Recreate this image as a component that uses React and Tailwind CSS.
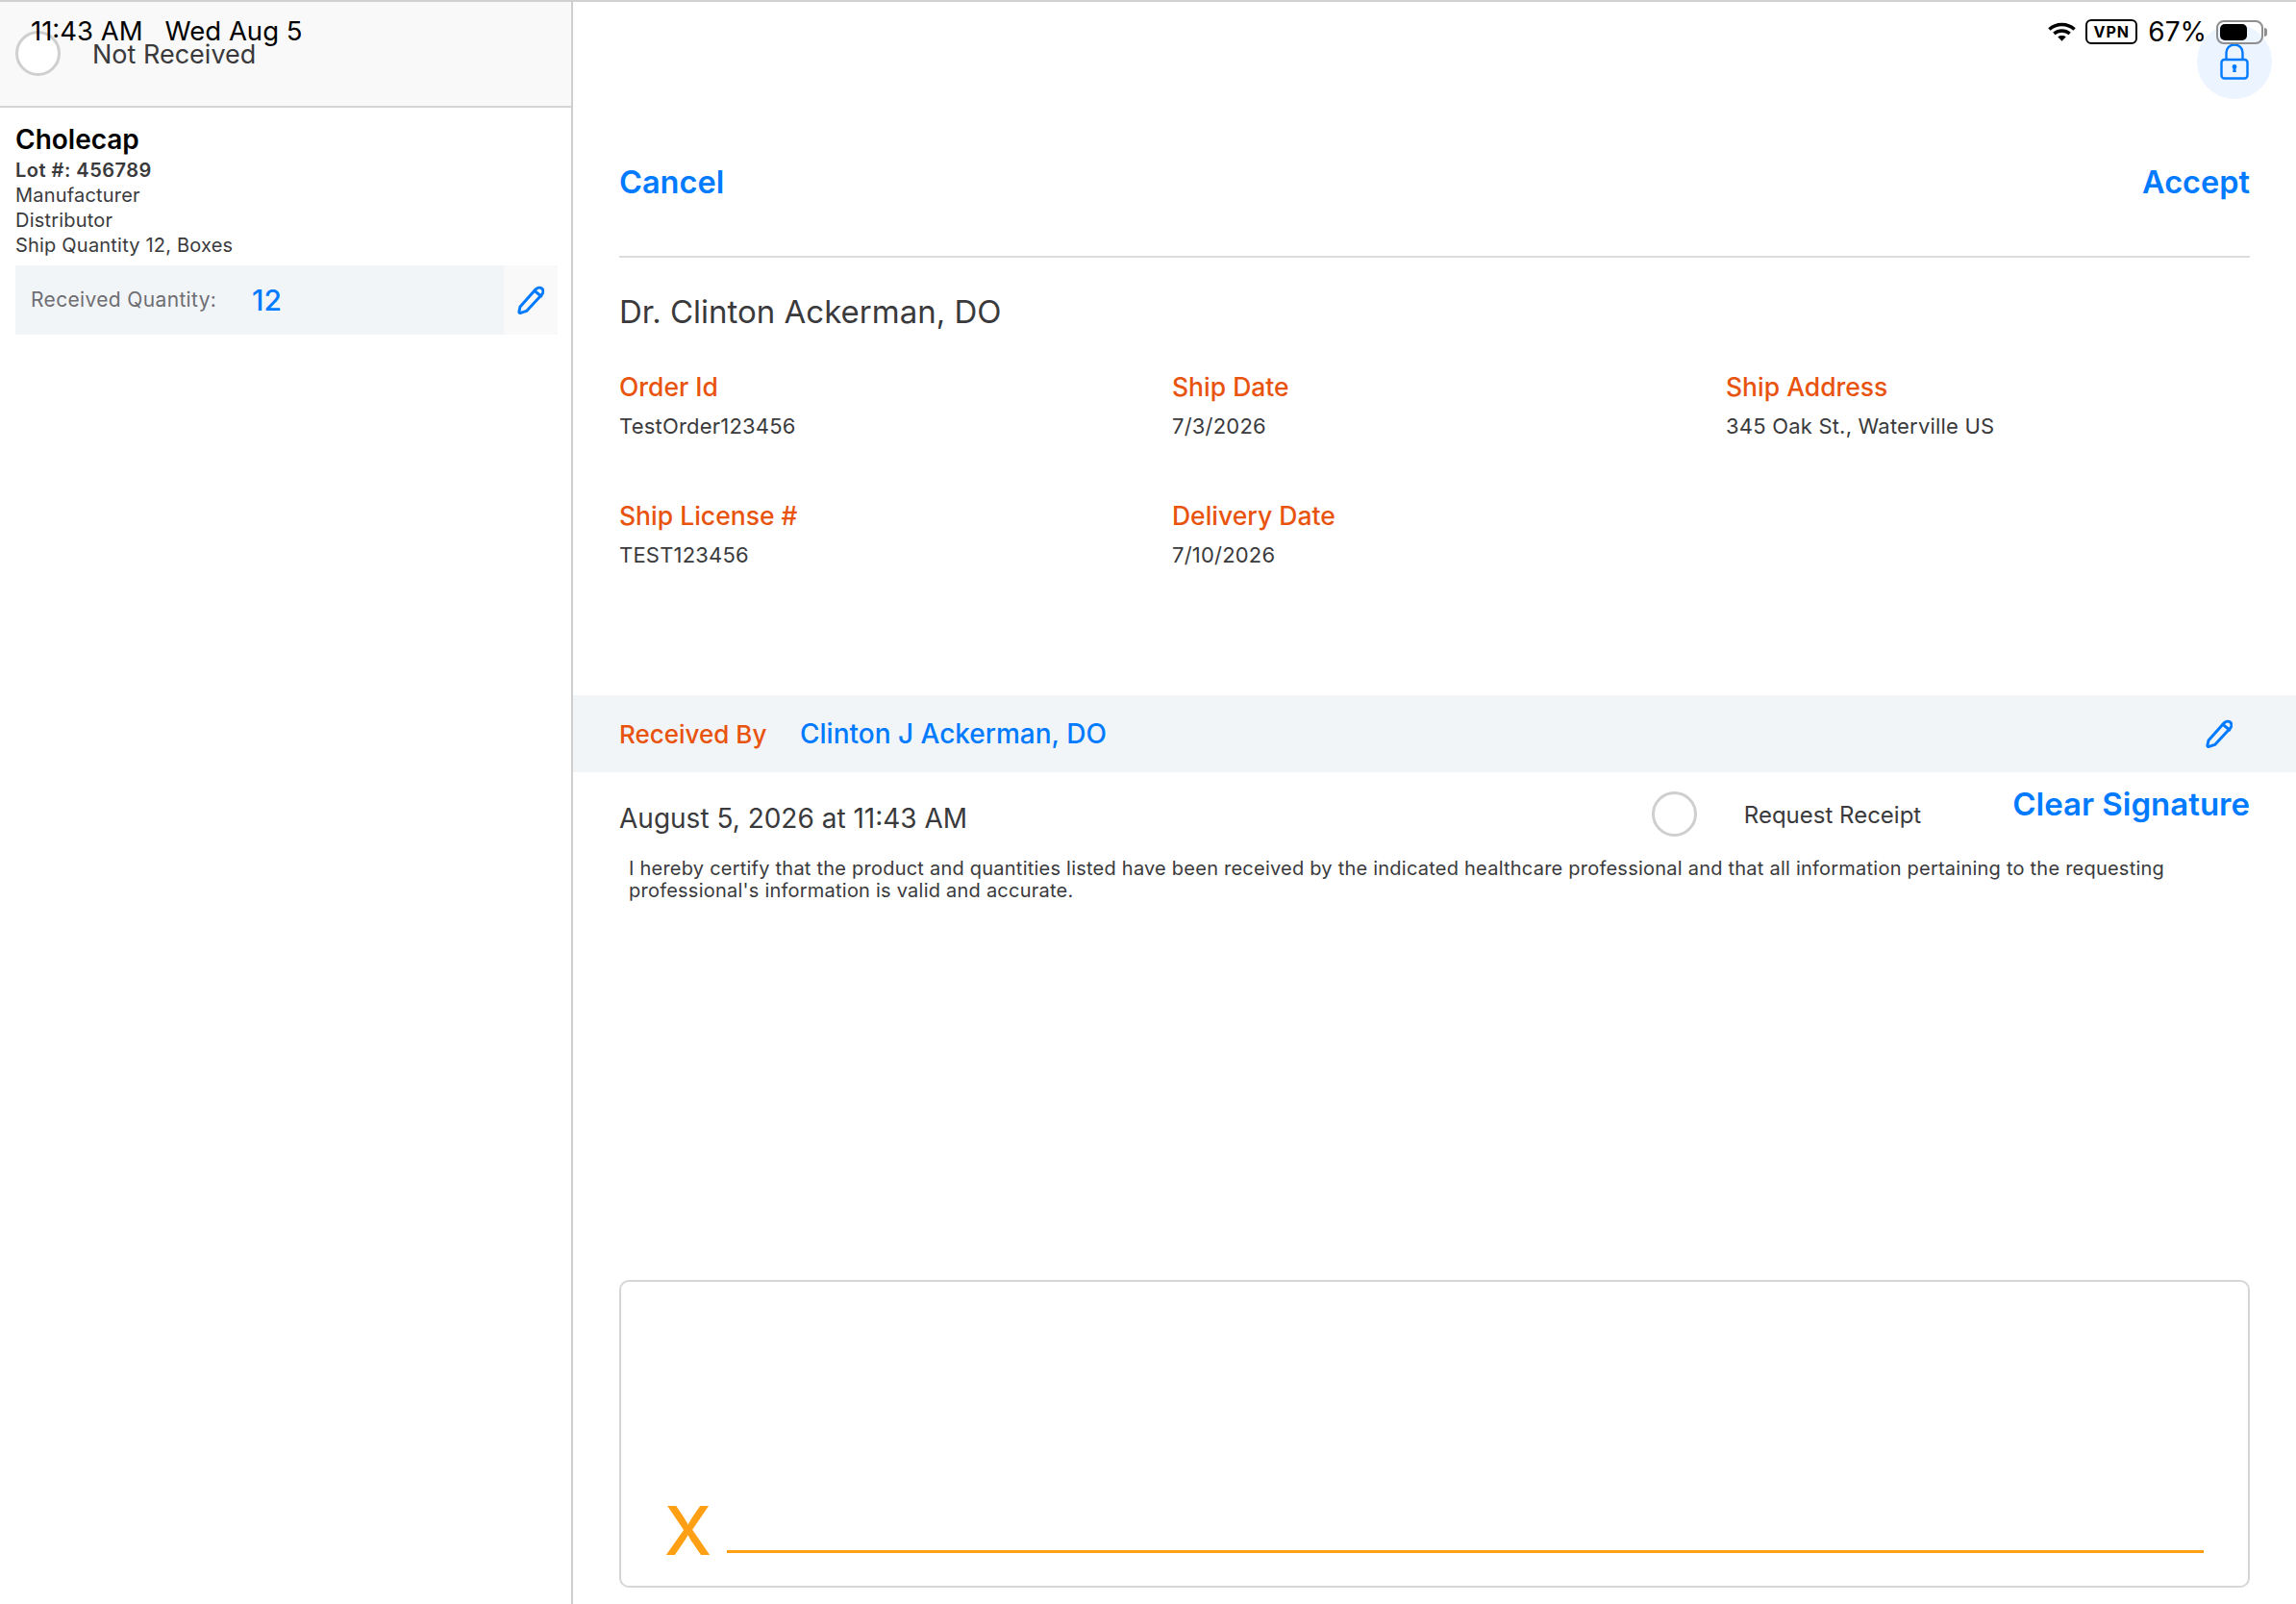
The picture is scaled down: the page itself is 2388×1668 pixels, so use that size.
import React from "react";

const Pencil = ({ className }) => (
    <svg viewBox="0 0 28 30" fill="none" stroke="#007aff" strokeWidth="3" strokeLinejoin="round" strokeLinecap="round" className={className}>
        <path d="M3 22 L19 4 C21 1.8 24 1.6 25.8 3.2 C27.4 4.8 27.2 7.4 25.4 9.4 L9.6 26.4 L3.6 28.4 C2.4 28.8 1.6 28 1.9 26.8 Z" />
        <path d="M18 5.4 L24.8 11" />
    </svg>
);

const Radio = () => <div className="w-[47px] h-[47px] rounded-full border-[3px] border-[#cfcfcf] bg-white shrink-0" />;

const InfoField = ({ label, value, className }) => (
    <div className={className}>
        <div className="text-[26.5px] leading-[32px] font-medium text-[#e8530e]">{label}</div>
        <div className="text-[22px] leading-[28px] tracking-[0.2px] mt-[11px] text-[#3a3a3c]">{value}</div>
    </div>
);

const StatusBar = () => (
    <>
        <div className="absolute top-[12px] left-[32px] flex text-[27.5px] leading-[36px] text-black z-10">
            <span>11:43 AM</span>
            <span className="ml-[23px]">Wed Aug 5</span>
        </div>
        <div className="absolute top-[13px] right-[30px] flex items-center h-[36px] z-10">
            <svg viewBox="0 0 30 20" className="w-[29px] h-[20px]" fill="none" stroke="#000" strokeWidth="3.6">
                <path d="M1.5 7.5 C9 0.5 21 0.5 28.5 7.5" />
                <path d="M6.5 12 C11.5 7.8 18.5 7.8 23.5 12" />
                <path d="M15 20 L10.6 15.4 C13 13.6 17 13.6 19.4 15.4 Z" fill="#000" stroke="none" />
            </svg>
            <div className="ml-[10px] w-[54px] h-[26px] rounded-[6px] border-2 border-black flex items-center justify-center text-[16px] font-bold tracking-[1px] text-black">VPN</div>
            <span className="ml-[11px] text-[28px] text-black">67%</span>
            <div className="ml-[10px] w-[49px] h-[25px] rounded-[8px] border-2 border-[#8e8e8e] p-[2px]">
                <div className="w-[28px] h-full rounded-[5px] bg-black" />
            </div>
            <div className="ml-[1px] w-[3px] h-[9px] rounded-r-full bg-[#8e8e8e]" />
        </div>
    </>
);

export default function App() {
    return (
        <div className="relative flex h-[1668px] overflow-hidden bg-white font-['Inter',sans-serif] border-t-2 border-[#d1d1d1]">
            <StatusBar />

            {/* lock button */}
            <div className="absolute top-[23px] right-[25px] w-[78px] h-[78px] rounded-full bg-[#ebf4ff] flex items-center justify-center">
                <svg viewBox="0 0 30 38" className="w-[30px] h-[38px]" fill="none" stroke="#007aff" strokeWidth="2.4">
                    <path d="M6.5 17 V10 C6.5 5 10 1.5 15 1.5 C20 1.5 23.5 5 23.5 10 V17" />
                    <rect x="1.5" y="17" width="27" height="19.5" rx="3" />
                    <circle cx="15" cy="24.5" r="2.4" fill="#007aff" stroke="none" />
                    <path d="M13.8 25 H16.2 L16.8 30 H13.2 Z" fill="#007aff" stroke="none" />
                </svg>
            </div>

            <aside className="w-[596px] shrink-0 border-r-2 border-[#cfcfcf]">
                <div className="h-[110px] bg-[#f9f9f9] border-b-2 border-[#d4d4d4] px-[16px] pt-[30px] flex items-start">
                    <Radio />
                    <span className="ml-[33px] mt-[8px] text-[27px] leading-[34px] text-[#3a3a3c]">Not Received</span>
                </div>
                <div className="pl-[16px] pr-[14px] pt-[16px]">
                    <div className="text-[28px] leading-[34px] font-semibold text-black">Cholecap</div>
                    <div className="mt-[2px] text-[20px] leading-[26px] tracking-[0.2px] text-[#3a3a3c]">
                        <div className="font-semibold tracking-[0.5px]">Lot #: 456789</div>
                        <div>Manufacturer</div>
                        <div>Distributor</div>
                        <div>Ship Quantity 12, Boxes</div>
                    </div>
                    <div className="mt-[8px] flex h-[72px]">
                        <div className="w-[508px] bg-[#f2f5f8] flex items-center pl-[16px]">
                            <span className="w-[230px] text-[21px] tracking-[0.35px] text-[#6e6e73]">Received Quantity:</span>
                            <span className="text-[30px] font-medium text-[#007aff]">12</span>
                        </div>
                        <div className="w-[56px] bg-[#f9f9f9] flex items-center justify-center">
                            <Pencil className="w-[28px] h-[30px]" />
                        </div>
                    </div>
                </div>
            </aside>

            <main className="flex-1 flex flex-col min-w-0">
                <div className="px-[48px]">
                    <div className="h-[266px] border-b-2 border-[#dcdcdc] flex items-start justify-between pt-[167px] text-[32.5px] leading-[42px] font-semibold text-[#007aff]">
                        <span>Cancel</span>
                        <span>Accept</span>
                    </div>
                    <div className="mt-[36px] text-[33px] leading-[40px] text-[#3a3a3c]">Dr. Clinton Ackerman, DO</div>
                    <div className="mt-[42px] grid grid-cols-[575px_576px_1fr]">
                        <InfoField label="Order Id" value="TestOrder123456" />
                        <InfoField label="Ship Date" value="7/3/2026" />
                        <InfoField label="Ship Address" value="345 Oak St., Waterville US" />
                        <InfoField label="Ship License #" value="TEST123456" className="mt-[63px]" />
                        <InfoField label="Delivery Date" value="7/10/2026" className="mt-[63px]" />
                    </div>
                </div>

                <div className="mt-[132px] h-[80px] bg-[#f2f5f8] flex items-center pl-[48px] pr-[66px] font-medium">
                    <span className="w-[188px] text-[26px] text-[#e8530e]">Received By</span>
                    <span className="text-[28px] text-[#007aff]">Clinton J Ackerman, DO</span>
                    <Pencil className="ml-auto w-[28px] h-[30px]" />
                </div>

                <div className="px-[48px]">
                    <div className="flex items-start h-[89px]">
                        <span className="mt-[30px] text-[28px] leading-[36px] text-[#3a3a3c]">August 5, 2026 at 11:43 AM</span>
                        <div className="ml-auto mt-[20px] flex items-start">
                            <Radio />
                            <span className="ml-[49px] mt-[10px] text-[24px] leading-[30px] text-[#3a3a3c]">Request Receipt</span>
                        </div>
                        <span className="ml-[95px] mt-[12px] text-[33px] leading-[42px] font-semibold text-[#007aff]">Clear Signature</span>
                    </div>
                    <p className="pl-[10px] text-[20px] leading-[23px] tracking-[0.23px] text-[#3a3a3c]">
                        I hereby certify that the product and quantities listed have been received by the indicated healthcare professional and that all information pertaining to the requesting professional's information is valid and accurate.
                    </p>
                </div>

                <div className="mt-auto mb-[17px] mx-[48px] h-[320px] rounded-[10px] border-2 border-[#d6d6d6] flex items-end pl-[45px] pr-[46px] pb-[32px]">
                    <span className="text-[70px] leading-[51px] h-[51px] font-medium text-[#ff9f14]">X</span>
                    <div className="ml-[16px] flex-1 h-[3px] mb-[2px] bg-[#ff9f14]" />
                </div>
            </main>
        </div>
    );
}
